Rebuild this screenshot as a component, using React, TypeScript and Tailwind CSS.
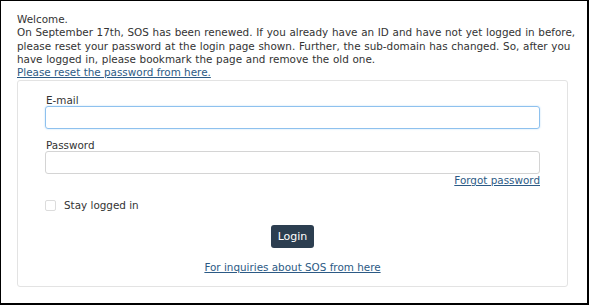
import { useState } from "react";

const font = { fontFamily: '"DejaVu Sans", Verdana, sans-serif' };

export default function App() {
  const [stay, setStay] = useState(false);

  return (
    <div
      className="w-[589px] h-[305px] bg-white border-black border-l border-t border-r-2 border-b-2 pl-[16px] pr-[19px] pt-[12px] text-[#333] text-[10.4px] leading-[13.3px]"
      style={font}
    >
      <p>Welcome.</p>
      <p className="whitespace-nowrap [word-spacing:0.4px]">
        On September 17th, SOS has been renewed. If you already have an ID and have not yet logged in before,
        <br />
        please reset your password at the login page shown. Further, the sub-domain has changed. So, after you
        <br />
        have logged in, please bookmark the page and remove the old one.
      </p>
      <a href="#" className="text-[#2c5a85] underline">
        Please reset the password from here.
      </a>

      <div className="mt-[1px] border border-[#e3e3e3] rounded-[3px] px-[27px] pt-[13px] pb-[12px]">
        <label className="block pl-[1px] leading-[12px]">E-mail</label>
        <input
          type="text"
          className="block w-full h-[23px] rounded-[3px] border border-[#8ec1ee] shadow-[0_0_2px_#bcdcf7] outline-none"
        />
        <label className="block pl-[1px] mt-[10px] leading-[12px]">Password</label>
        <input
          type="password"
          className="block w-full h-[23px] rounded-[3px] border border-[#d4d4d4] outline-none"
        />
        <div className="flex justify-end">
          <a href="#" className="text-[#2c5a85] underline">
            Forgot password
          </a>
        </div>
        <label className="flex items-center gap-[8px] mt-[11px] cursor-pointer">
          <span
            onClick={() => setStay(!stay)}
            className="w-[11px] h-[11px] border border-[#dcdcdc] rounded-[2px] bg-white"
          />
          <span>Stay logged in</span>
        </label>
        <div className="flex justify-center mt-[13px]">
          <button
            type="button"
            className="h-[23px] px-[7px] rounded-[3px] bg-[#2c3e50] text-white text-[11px]"
          >
            Login
          </button>
        </div>
        <div className="flex justify-center mt-[13px]">
          <a href="#" className="text-[#2c5a85] underline">
            For inquiries about SOS from here
          </a>
        </div>
      </div>
    </div>
  );
}
